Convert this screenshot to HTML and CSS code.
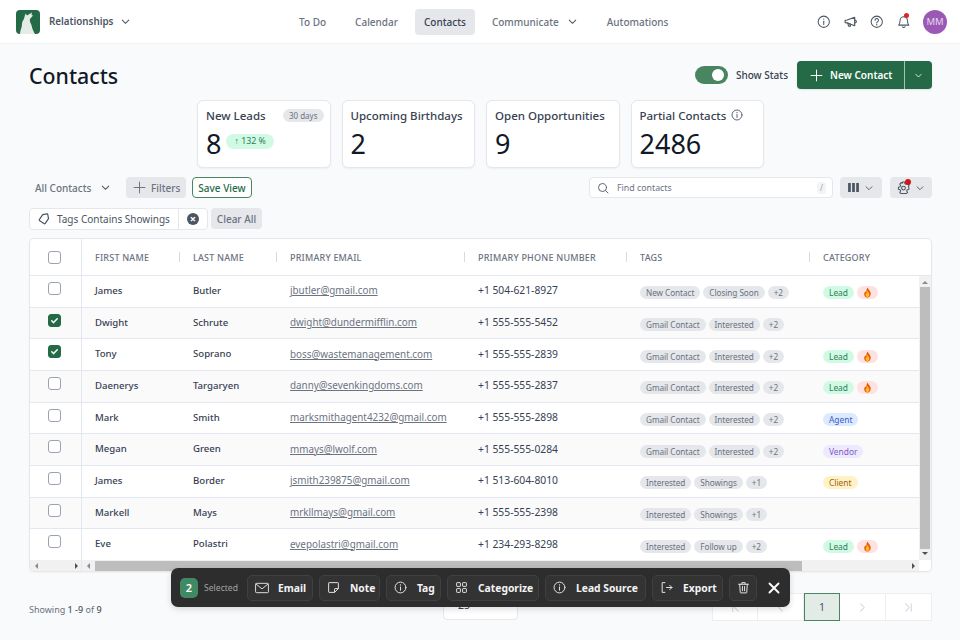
FILE: index.html
```html
<!DOCTYPE html>
<html lang="en">
<head>
<meta charset="utf-8">
<title>Contacts</title>
<link rel="stylesheet" href="styles.css">
</head>
<body>
<svg class="defs" width="0" height="0" aria-hidden="true">
  <defs>
    <symbol id="chev" viewBox="0 0 24 24"><path d="M5 9l7 7 7-7" fill="none" stroke="currentColor" stroke-width="2.2" stroke-linecap="round" stroke-linejoin="round"/></symbol>
    <symbol id="info" viewBox="0 0 24 24"><g fill="none" stroke="currentColor" stroke-width="1.8" stroke-linecap="round"><circle cx="12" cy="12" r="10"/><path d="M12 11v6"/><path d="M12 7.2v.1" stroke-width="2.4"/></g></symbol>
    <symbol id="flame" viewBox="0 0 24 24"><path d="M12 1c1 4 6 7 7 12 .8 5-3 10-7 10s-8-4-7-9c.4-2.400 1.600-3.500 2.500-5 .5 1.500 1 2.200 2 2.800C9.500 8 10 4 12 1z" fill="#e8590c"/><path d="M12 8c.6 2.500 4 5 4 8.500 0 3-2 5.500-4 5.500s-4-2.500-4-5.300c0-2 1.300-3 2-4.200.4.800.7 1.200 1.200 1.500C11 12 11 10 12 8z" fill="#fcc419"/></symbol>
  </defs>
</svg>

<header class="topbar">
  <div class="brand">
    <svg class="logo" viewBox="0 0 24 24"><rect width="24" height="24" rx="4" fill="#256a47"/><path d="M4 24c0-4 2-6 2-10 0-3 2-4 2.500-7l1-3.500L11 5.500l5-3-.5 2.500 1.500.5-3 3.500c-.5 1.500 0 3 1 5 1 2 1 5 4 10z" fill="#e5ece7"/></svg>
    <span class="brand-name">Relationships</span>
    <svg class="chev-lg"><use href="#chev"/></svg>
  </div>
  <nav class="nav">
    <a class="nav-item nav-first">To Do</a>
    <a class="nav-item">Calendar</a>
    <a class="nav-item active">Contacts</a>
    <a class="nav-item">Communicate<svg class="chev-lg nav-chev"><use href="#chev"/></svg></a>
    <a class="nav-item">Automations</a>
  </nav>
  <div class="top-icons">
    <svg class="top-icon"><use href="#info"/></svg>
    <svg class="top-icon" viewBox="0 0 24 24"><g fill="none" stroke="currentColor" stroke-width="2" stroke-linejoin="round" stroke-linecap="round"><path d="M2 9.500v4l3.500.5L19 19V4L5.500 9z"/><path d="M7 14.500l1 5.500h3.500l-1-4"/><path d="M19 9c1.700 0 3 1.200 3 2.500S20.700 14 19 14"/></g></svg>
    <svg class="top-icon" viewBox="0 0 24 24"><g fill="none" stroke="currentColor" stroke-width="1.800" stroke-linecap="round"><circle cx="12" cy="12" r="10"/><path d="M9 9.300a3 3 0 1 1 4.600 2.500c-1 .7-1.600 1.300-1.600 2.500"/><path d="M12 17.400v.1" stroke-width="2.400"/></g></svg>
    <span class="bell">
      <svg class="top-icon" viewBox="0 0 24 24"><g fill="none" stroke="currentColor" stroke-width="1.800" stroke-linecap="round" stroke-linejoin="round"><path d="M12 3a6.500 6.500 0 0 0-6.500 6.500c0 5-1 7-2.500 8.500h18c-1.500-1.500-2.500-3.500-2.500-8.500A6.500 6.500 0 0 0 12 3z"/><path d="M9.500 21c.6.8 1.500 1.200 2.500 1.200s1.900-.4 2.500-1.200"/></g></svg>
      <i class="dot dot-bell"></i>
    </span>
    <span class="avatar">MM</span>
  </div>
</header>

<main class="page">
  <div class="title-row">
    <h1 class="title">Contacts</h1>
    <div class="title-actions">
      <span class="toggle"><i class="knob"></i></span>
      <span class="toggle-label">Show Stats</span>
      <div class="split">
        <button class="split-main"><svg class="plus" viewBox="0 0 24 24"><path d="M12 2v20M2 12h20" stroke="currentColor" stroke-width="1.800" stroke-linecap="round"/></svg>New Contact</button>
        <button class="split-caret"><svg class="chev-sm"><use href="#chev"/></svg></button>
      </div>
    </div>
  </div>

  <section class="stats">
    <div class="stat">
      <div class="stat-head"><span>New Leads</span><span class="days">30 days</span></div>
      <div class="stat-value">8<span class="delta">↑ 132 %</span></div>
    </div>
    <div class="stat">
      <div class="stat-head"><span>Upcoming Birthdays</span></div>
      <div class="stat-value">2</div>
    </div>
    <div class="stat">
      <div class="stat-head"><span>Open Opportunities</span></div>
      <div class="stat-value">9</div>
    </div>
    <div class="stat">
      <div class="stat-head stat-head-tight"><span>Partial Contacts</span><svg class="stat-info"><use href="#info"/></svg></div>
      <div class="stat-value">2486</div>
    </div>
  </section>

  <div class="toolbar">
    <span class="view-select">All Contacts<svg class="chev-lg"><use href="#chev"/></svg></span>
    <button class="btn-grey filters"><svg class="plus" viewBox="0 0 24 24"><path d="M12 2v20M2 12h20" stroke="currentColor" stroke-width="1.800" stroke-linecap="round"/></svg>Filters</button>
    <button class="btn-outline">Save View</button>
    <div class="search">
      <svg class="search-icon" viewBox="0 0 24 24"><g fill="none" stroke="currentColor" stroke-width="1.800" stroke-linecap="round"><circle cx="11" cy="11" r="8"/><path d="M17 17l5 5"/></g></svg>
      <span class="search-text">Find contacts</span>
      <span class="slash">/</span>
    </div>
    <button class="btn-grey icon-btn"><svg class="cols" viewBox="0 0 12 10"><path d="M0 0h3v10H0zM4.500 0h3v10h-3zM9 0h3v10H9z" fill="currentColor"/></svg><svg class="chev-md"><use href="#chev"/></svg></button>
    <button class="btn-grey icon-btn gear-btn">
      <span class="gear-wrap">
        <svg class="gear" viewBox="0 0 24 24"><g fill="none" stroke="currentColor" stroke-width="1.900" stroke-linejoin="round"><path d="M10 2h4l.6 3 2.600 1.100 2.600-1.700 2.800 2.800-1.700 2.600L22 12.400v3l-3 .6-1.100 2.600 1.700 2.600-2 1.800H7l-2-1.800 1.700-2.600L5.600 16l-3-.6v-4l3-.6L6.700 8.200 5 5.600l2.800-2.800 2 1.400z"/><circle cx="12" cy="13" r="3.500"/></g></svg>
        <i class="dot dot-gear"></i>
      </span>
      <svg class="chev-md"><use href="#chev"/></svg>
    </button>
  </div>

  <div class="filter-row">
    <div class="chip">
      <span class="chip-label">
        <svg class="tag-icon" viewBox="0 0 24 24"><g fill="none" stroke="currentColor" stroke-width="2.400" stroke-linejoin="round"><path d="M3 11l8-8h8.500a1.500 1.500 0 0 1 1.500 1.500V13l-8 8a2 2 0 0 1-2.800 0L3 14a2 2 0 0 1 0-3z"/></g></svg>
        Tags Contains Showings
      </span>
      <span class="chip-close"><i class="x-circle">×</i></span>
    </div>
    <button class="btn-grey clear">Clear All</button>
  </div>

  <section class="table">
    <div class="thead row-grid">
      <div class="cell-check"><span class="cb"></span></div>
      <div class="th sep">FIRST NAME</div>
      <div class="th sep">LAST NAME</div>
      <div class="th sep">PRIMARY EMAIL</div>
      <div class="th sep">PRIMARY PHONE NUMBER</div>
      <div class="th sep">TAGS</div>
      <div class="th">CATEGORY</div>
    </div>
    <div class="tbody-wrap">
      <div class="tbody">
        <div class="tr row-grid">
          <div class="cell-check"><span class="cb"></span></div>
          <div class="td name">James</div><div class="td name">Butler</div>
          <div class="td"><a class="mail">jbutler@gmail.com</a></div>
          <div class="td phone">+1 504-621-8927</div>
          <div class="td tags"><span class="tag">New Contact</span><span class="tag">Closing Soon</span><span class="tag">+2</span></div>
          <div class="td tags"><span class="tag lead">Lead</span><span class="tag hot"><svg class="flame"><use href="#flame"/></svg></span></div>
        </div>
        <div class="tr row-grid alt">
          <div class="cell-check"><span class="cb on"><svg viewBox="0 0 12 12"><path d="M3 6.300l2 2 4-4.300" fill="none" stroke="#fff" stroke-width="1.600" stroke-linecap="round" stroke-linejoin="round"/></svg></span></div>
          <div class="td name">Dwight</div><div class="td name">Schrute</div>
          <div class="td"><a class="mail">dwight@dundermifflin.com</a></div>
          <div class="td phone">+1 555-555-5452</div>
          <div class="td tags"><span class="tag">Gmail Contact</span><span class="tag">Interested</span><span class="tag">+2</span></div>
          <div class="td tags"></div>
        </div>
        <div class="tr row-grid">
          <div class="cell-check"><span class="cb on"><svg viewBox="0 0 12 12"><path d="M3 6.300l2 2 4-4.300" fill="none" stroke="#fff" stroke-width="1.600" stroke-linecap="round" stroke-linejoin="round"/></svg></span></div>
          <div class="td name">Tony</div><div class="td name">Soprano</div>
          <div class="td"><a class="mail">boss@wastemanagement.com</a></div>
          <div class="td phone">+1 555-555-2839</div>
          <div class="td tags"><span class="tag">Gmail Contact</span><span class="tag">Interested</span><span class="tag">+2</span></div>
          <div class="td tags"><span class="tag lead">Lead</span><span class="tag hot"><svg class="flame"><use href="#flame"/></svg></span></div>
        </div>
        <div class="tr row-grid alt">
          <div class="cell-check"><span class="cb"></span></div>
          <div class="td name">Daenerys</div><div class="td name">Targaryen</div>
          <div class="td"><a class="mail">danny@sevenkingdoms.com</a></div>
          <div class="td phone">+1 555-555-2837</div>
          <div class="td tags"><span class="tag">Gmail Contact</span><span class="tag">Interested</span><span class="tag">+2</span></div>
          <div class="td tags"><span class="tag lead">Lead</span><span class="tag hot"><svg class="flame"><use href="#flame"/></svg></span></div>
        </div>
        <div class="tr row-grid">
          <div class="cell-check"><span class="cb"></span></div>
          <div class="td name">Mark</div><div class="td name">Smith</div>
          <div class="td"><a class="mail">marksmithagent4232@gmail.com</a></div>
          <div class="td phone">+1 555-555-2898</div>
          <div class="td tags"><span class="tag">Gmail Contact</span><span class="tag">Interested</span><span class="tag">+2</span></div>
          <div class="td tags"><span class="tag agent">Agent</span></div>
        </div>
        <div class="tr row-grid alt">
          <div class="cell-check"><span class="cb"></span></div>
          <div class="td name">Megan</div><div class="td name">Green</div>
          <div class="td"><a class="mail">mmays@lwolf.com</a></div>
          <div class="td phone">+1 555-555-0284</div>
          <div class="td tags"><span class="tag">Gmail Contact</span><span class="tag">Interested</span><span class="tag">+2</span></div>
          <div class="td tags"><span class="tag vendor">Vendor</span></div>
        </div>
        <div class="tr row-grid">
          <div class="cell-check"><span class="cb"></span></div>
          <div class="td name">James</div><div class="td name">Border</div>
          <div class="td"><a class="mail">jsmith239875@gmail.com</a></div>
          <div class="td phone">+1 513-604-8010</div>
          <div class="td tags"><span class="tag">Interested</span><span class="tag">Showings</span><span class="tag">+1</span></div>
          <div class="td tags"><span class="tag client">Client</span></div>
        </div>
        <div class="tr row-grid alt">
          <div class="cell-check"><span class="cb"></span></div>
          <div class="td name">Markell</div><div class="td name">Mays</div>
          <div class="td"><a class="mail">mrkllmays@gmail.com</a></div>
          <div class="td phone">+1 555-555-2398</div>
          <div class="td tags"><span class="tag">Interested</span><span class="tag">Showings</span><span class="tag">+1</span></div>
          <div class="td tags"></div>
        </div>
        <div class="tr row-grid">
          <div class="cell-check"><span class="cb"></span></div>
          <div class="td name">Eve</div><div class="td name">Polastri</div>
          <div class="td"><a class="mail">evepolastri@gmail.com</a></div>
          <div class="td phone">+1 234-293-8298</div>
          <div class="td tags"><span class="tag">Interested</span><span class="tag">Follow up</span><span class="tag">+2</span></div>
          <div class="td tags"><span class="tag lead">Lead</span><span class="tag hot"><svg class="flame"><use href="#flame"/></svg></span></div>
        </div>
      </div>
      <div class="vscroll">
        <i class="arr arr-up"></i>
        <span class="vthumb"></span>
        <i class="arr arr-down"></i>
      </div>
    </div>
    <div class="hscroll">
      <div class="hs-fixed"><i class="arr arr-left"></i><i class="arr arr-right"></i></div>
      <div class="hs-main"><i class="arr arr-left"></i><span class="hthumb"></span><i class="arr arr-right"></i></div>
      <div class="hs-corner"></div>
    </div>
  </section>

  <footer class="pager-row">
    <span class="showing">Showing <b>1</b> <b>-9</b> of <b>9</b></span>
    <div class="per-page">25<svg class="chev-md"><use href="#chev"/></svg></div>
    <div class="pager">
      <span class="pg pg-end"><svg class="pg-icon" viewBox="0 0 12 12"><path d="M3 2v8M9 2L5 6l4 4" fill="none" stroke="currentColor" stroke-width="1.100" stroke-linecap="round" stroke-linejoin="round"/></svg></span>
      <span class="pg"><svg class="pg-icon" viewBox="0 0 12 12"><path d="M8 2L4 6l4 4" fill="none" stroke="currentColor" stroke-width="1.100" stroke-linecap="round" stroke-linejoin="round"/></svg></span>
      <span class="pg current">1</span>
      <span class="pg"><svg class="pg-icon" viewBox="0 0 12 12"><path d="M4 2l4 4-4 4" fill="none" stroke="currentColor" stroke-width="1.100" stroke-linecap="round" stroke-linejoin="round"/></svg></span>
      <span class="pg pg-end"><svg class="pg-icon" viewBox="0 0 12 12"><path d="M9 2v8M3 2l4 4-4 4" fill="none" stroke="currentColor" stroke-width="1.100" stroke-linecap="round" stroke-linejoin="round"/></svg></span>
    </div>
  </footer>
</main>

<aside class="bulk">
  <span class="count">2</span>
  <span class="selected">Selected</span>
  <button class="bulk-btn b-email"><svg class="bi" viewBox="0 0 24 24"><g fill="none" stroke="currentColor" stroke-width="1.600" stroke-linejoin="round"><rect x="1" y="4" width="22" height="16" rx="1.500"/><path d="M1.500 5l10.500 8.500L22.500 5"/></g></svg>Email</button>
  <button class="bulk-btn b-note"><svg class="bi" viewBox="0 0 24 24"><path d="M4 3h16a1 1 0 0 1 1 1v10l-7 7H4a1 1 0 0 1-1-1V4a1 1 0 0 1 1-1zM14 21v-6a1 1 0 0 1 1-1h6" fill="none" stroke="currentColor" stroke-width="1.800" stroke-linejoin="round"/></svg>Note</button>
  <button class="bulk-btn b-tag"><svg class="bi"><use href="#info"/></svg>Tag</button>
  <button class="bulk-btn b-cat"><svg class="bi" viewBox="0 0 24 24"><g fill="none" stroke="currentColor" stroke-width="1.800"><rect x="3" y="3" width="7" height="7" rx="1"/><rect x="14" y="3" width="7" height="7" rx="1"/><rect x="3" y="14" width="7" height="7" rx="1"/><rect x="14" y="14" width="7" height="7" rx="1"/></g></svg>Categorize</button>
  <button class="bulk-btn b-lead"><svg class="bi"><use href="#info"/></svg>Lead Source</button>
  <button class="bulk-btn b-export"><svg class="bi" viewBox="0 0 24 24"><path d="M9 3H4v18h5M12 12h10M18 8l4 4-4 4" fill="none" stroke="currentColor" stroke-width="1.800" stroke-linecap="round" stroke-linejoin="round"/></svg>Export</button>
  <button class="bulk-btn b-trash"><svg class="bi" viewBox="0 0 24 24"><g fill="none" stroke="currentColor" stroke-width="1.800" stroke-linecap="round" stroke-linejoin="round"><path d="M3 6h18M9 6V3h6v3M5 6l1 15a1 1 0 0 0 1 1h10a1 1 0 0 0 1-1l1-15M10 10v8M14 10v8"/></g></svg></button>
  <svg class="bulk-x" viewBox="0 0 12 12"><path d="M1.500 1.500l9 9M10.500 1.500l-9 9" stroke="#fff" stroke-width="1.900" stroke-linecap="round"/></svg>
</aside>
</body>
</html>
```
FILE: styles.css
```css
* { box-sizing: border-box; }
html, body { margin: 0; height: 640px; overflow: hidden; }
body { background: #f9fafb; font-family: "Noto Sans", sans-serif; color: #111827; position: relative; }
button { font-family: inherit; border: 0; padding: 0; cursor: pointer; }
a { text-decoration: none; }
.defs { position: absolute; }
svg { display: block; flex: none; }
.chev-lg { width: 11px; height: 11px; color: #4b5563; }
.chev-md { width: 10px; height: 10px; color: #4b5563; }
.chev-sm { width: 9px; height: 9px; color: #fff; }

.topbar { height: 43px; background: #fff; display: flex; align-items: center; padding: 0 13px 0 16px; box-shadow: 0 1px 1px rgba(17,24,39,.04); }
.brand { width: 274px; display: flex; align-items: center; }
.logo { width: 24px; height: 24px; margin-right: 9px; }
.brand-name { font-size: 9.800px; font-weight: 600; color: #4b5563; margin-right: 7px; }
.nav { display: flex; align-items: center; gap: 8px; }
.nav-item { height: 26px; padding: 0 9px; border-radius: 4px; display: flex; align-items: center; font-size: 10px; font-weight: 500; color: #6b7280; }
.nav-first { margin-right: 3px; }
.nav-item.active { background: #e5e7eb; color: #374151; }
.nav-chev { margin-left: 8px; margin-right: 3px; }
.top-icons { margin-left: auto; display: flex; align-items: center; gap: 13px; color: #4b5563; }
.top-icon { width: 13.500px; height: 13.500px; color: #4b5563; }
.bell { position: relative; }
.dot { position: absolute; display: block; border-radius: 50%; background: #dc2626; }
.dot-bell { width: 5px; height: 5px; top: -2px; right: 1px; }
.avatar { width: 24px; height: 24px; border-radius: 50%; background: #9b59b6; color: #e6d5ee; font-size: 9.500px; display: flex; align-items: center; justify-content: center; }

.page { padding: 18px 28px 0 29px; }
.title-row { display: flex; justify-content: space-between; align-items: center; height: 28px; }
.title { margin: 2px 0 0; font-size: 21.300px; font-weight: 500; color: #111827; line-height: 28px; }
.title-actions { display: flex; align-items: center; }
.toggle { width: 33px; height: 18px; border-radius: 9px; background: #4a8562; display: flex; align-items: center; justify-content: flex-end; padding-right: 4px; margin-right: 8px; }
.knob { width: 12px; height: 12px; border-radius: 50%; background: #fff; display: block; }
.toggle-label { font-size: 10px; font-weight: 500; color: #374151; margin-right: 9px; }
.split { display: flex; height: 28px; border-radius: 4px; overflow: hidden; background: #256a47; color: #fff; box-shadow: 0 1px 2px rgba(0,0,0,.1); }
.split-main { width: 108px; background: transparent; color: #fff; font-size: 10px; font-weight: 600; display: flex; align-items: center; padding-left: 13px; gap: 7px; border-right: 1px solid rgba(255,255,255,.6); }
.split-caret { width: 27px; background: transparent; display: flex; align-items: center; justify-content: center; }
.plus { width: 13px; height: 13px; }

.stats { display: flex; justify-content: center; gap: 11px; margin-top: 11px; }
.stat { width: 133.500px; height: 68px; background: #fff; border: 1px solid #e5e7eb; border-radius: 6px; padding: 6px 6px 0 8px; box-shadow: 0 1px 2px rgba(17,24,39,.05); }
.stat-head { display: flex; justify-content: space-between; align-items: center; height: 16px; font-size: 11.500px; font-weight: 500; color: #374151; white-space: nowrap; }
.stat-head-tight { justify-content: flex-start; gap: 5px; }
.stat-info { width: 12px; height: 12px; color: #4b5563; }
.days { background: #e5e7eb; border-radius: 7px; font-size: 8px; font-weight: 400; color: #6b7280; padding: 0 6px; height: 13px; line-height: 13px; }
.stat-value { display: flex; align-items: center; font-size: 27px; line-height: 34px; font-weight: 400; color: #111827; margin-top: 4px; }
.delta { background: #d1fae5; color: #2f7d5a; border-radius: 8px; font-size: 8.800px; height: 15px; line-height: 15px; padding: 0 8px; margin-left: 5px; margin-top: -6px; }

.toolbar { display: flex; align-items: center; height: 21px; margin-top: 9px; }
.view-select { width: 97px; padding-left: 6px; display: flex; align-items: center; gap: 9px; font-size: 10px; font-weight: 500; color: #6b7280; }
.btn-grey { background: #e5e7eb; color: #6b7280; border-radius: 4px; font-size: 10px; font-weight: 500; }
.filters { width: 60px; height: 21px; display: flex; align-items: center; gap: 5px; padding-left: 7px; margin-right: 6px; }
.btn-outline { width: 60px; height: 21px; background: #fff; border: 1px solid #4a8562; border-radius: 4px; color: #256a47; font-size: 10px; font-weight: 500; }
.search { width: 244px; height: 21px; background: #fff; border: 1px solid #e5e7eb; border-radius: 4px; margin-left: auto; display: flex; align-items: center; padding: 0 6px 0 7px; }
.search-icon { width: 12px; height: 12px; color: #4b5563; margin-right: 8px; }
.search-text { font-size: 8.800px; color: #6b7280; flex: 1; }
.slash { background: #f3f4f6; color: #9ca3af; font-size: 8px; border-radius: 3px; padding: 0 3px; line-height: 12px; }
.icon-btn { width: 42px; height: 21px; display: flex; align-items: center; justify-content: center; gap: 5px; margin-left: 7px; color: #4b5563; }
.gear-btn { margin-left: 8px; }
.cols { width: 11px; height: 9px; }
.gear-wrap { position: relative; display: block; }
.gear { width: 13px; height: 13px; }
.dot-gear { width: 6px; height: 6px; top: -2px; right: -1px; background: #d01616; }

.filter-row { display: flex; align-items: center; gap: 3px; margin-top: 10px; height: 21px; }
.chip { width: 179px; height: 22px; background: #fff; border: 1px solid #e5e7eb; border-radius: 4px; display: flex; align-items: center; }
.chip-label { flex: 1; height: 100%; display: flex; align-items: center; gap: 7px; padding-left: 8px; font-size: 10px; color: #4b5563; border-right: 1px solid #e5e7eb; white-space: nowrap; }
.tag-icon { width: 12px; height: 12px; transform: rotate(-10deg); }
.chip-close { width: 28px; display: flex; align-items: center; justify-content: center; }
.x-circle { width: 12px; height: 12px; border-radius: 50%; background: #4b5563; color: #fff; font-style: normal; font-size: 11px; line-height: 12px; text-align: center; font-weight: 700; }
.clear { width: 51px; height: 21px; font-size: 10px; }

.table { margin-top: 9px; height: 334px; background: #fff; border: 1px solid #e5e7eb; border-radius: 5px; overflow: hidden; display: flex; flex-direction: column; box-shadow: 0 1px 2px rgba(17,24,39,.04); }
.row-grid { display: grid; grid-template-columns: 52px 98px 97px 188px 162px 183px 122px; }
.thead { height: 37px; flex: none; border-bottom: 1px solid #e5e7f0; align-items: stretch; }
.cell-check { display: flex; align-items: center; justify-content: center; border-right: 1px solid #e5e7f0; padding-right: 3px; }
.tr .cell-check { padding-bottom: 6px; }
.th { display: flex; align-items: center; padding-left: 13px; padding-top: 1px; font-size: 9px; font-weight: 500; letter-spacing: .2px; color: #6b7280; white-space: nowrap; position: relative; }
.th.sep::after { content: ""; position: absolute; right: 0; top: 13px; height: 10px; width: 1px; background: #d5dbe6; }
.cb { width: 13px; height: 13px; border: 1px solid #9ca3af; border-radius: 3px; background: #fff; display: block; }
.cb.on { background: #256a47; border-color: #256a47; }
.cb.on svg { width: 11px; height: 11px; }
.tbody-wrap { flex: 1; display: flex; min-height: 0; }
.tbody { width: 891px; display: flex; flex-direction: column; overflow: hidden; }
.tr { flex: 1; border-bottom: 1px solid #e5e7f0; min-height: 0; width: 902px; }
.tr:last-child { border-bottom: 0; }
.tr.alt { background: #fafafb; }
.td { display: flex; align-items: center; padding-left: 13px; font-size: 9.600px; white-space: nowrap; padding-bottom: 2px; }
.name { font-weight: 500; color: #374151; }
.mail { color: #6b7280; text-decoration: underline; font-size: 9.850px; }
.phone { color: #374151; font-size: 10.300px; }
.tags { gap: 3px; padding-top: 3px; padding-bottom: 0; }
.tag { height: 13px; line-height: 13px; padding: 0 6px; border-radius: 7px; background: #e5e7eb; color: #6b7280; font-size: 8.200px; letter-spacing: -.05px; display: block; }
.lead { background: #d1fae5; color: #2f7d5a; font-size: 8.400px; letter-spacing: 0; }
.hot { background: #fee2e2; width: 21px; display: flex; align-items: center; justify-content: center; padding: 0; }
.flame { width: 11px; height: 13px; }
.agent { background: #dbeafe; color: #3b5bc9; font-size: 8.400px; letter-spacing: 0; }
.vendor { background: #ede9fe; color: #7c5cc4; font-size: 8.400px; letter-spacing: 0; }
.client { background: #fef3c7; color: #a16207; font-size: 8.400px; letter-spacing: 0; }

.vscroll { width: 12px; flex: none; background: #f1f1f1; display: flex; flex-direction: column; align-items: center; justify-content: space-between; padding: 5px 0 5px; }
.vthumb { width: 10px; flex: 1; margin: 3px 0; background: #bdbdbd; display: block; }
.arr { width: 0; height: 0; display: block; border: 3px solid transparent; flex: none; }
.arr-up { border-bottom-color: #8a8a8a; border-top-width: 0; }
.arr-down { border-top-color: #505050; border-bottom-width: 0; }
.arr-left { border-right-color: #8a8a8a; border-left-width: 0; }
.arr-right { border-left-color: #505050; border-right-width: 0; }
.hscroll { height: 11px; flex: none; display: flex; background: #f1f1f1; }
.hs-fixed { width: 52px; display: flex; justify-content: space-between; align-items: center; padding: 0 3px 0 5px; border-right: 1px solid #e5e7f0; }
.hs-main { flex: 1; display: flex; align-items: center; padding: 0 4px 0 5px; }
.hthumb { width: 707px; height: 10px; margin-left: 5px; background: #bdbdbd; display: block; margin-right: auto; }
.hs-corner { width: 12px; background: #fff; }

.pager-row { display: flex; align-items: flex-start; margin-top: 18px; }
.showing { width: 414px; font-size: 9px; color: #6b7280; margin-top: 13px; }
.showing b { font-weight: 500; color: #4b5563; }
.per-page { width: 75px; height: 30px; background: #fff; border: 1px solid #e5e7eb; border-radius: 4px; display: flex; align-items: center; justify-content: space-between; padding: 0 8px 0 14px; font-size: 10.500px; color: #374151; }
.pager { margin-left: auto; margin-top: 3px; display: flex; height: 28px; background: #fff; border: 1px solid #eceef2; }
.pg { width: 46px; display: flex; align-items: center; justify-content: center; color: #d1d5db; border-right: 1px solid #eceef2; }
.pg-end { width: 45px; }
.pg:last-child { border-right: 0; }
.pg-icon { width: 11px; height: 11px; }
.pg.current { width: 36px; background: #e3ebe6; border: 1px solid #4a8562; color: #4b5563; font-size: 10.500px; margin: -1px 0; }

.bulk { position: absolute; left: 171px; top: 568px; width: 619px; height: 39px; background: #2d2d2d; border-radius: 7px; display: flex; align-items: center; padding-left: 9px; box-shadow: 0 2px 6px rgba(0,0,0,.15); }
.count { width: 18px; height: 20px; border-radius: 5px; background: #3f8a63; color: #fff; font-size: 11px; font-weight: 600; text-align: center; line-height: 20px; }
.selected { font-size: 8.600px; color: #a3a3a3; margin: 0 9px 0 6px; width: 34px; white-space: nowrap; }
.bulk-btn { height: 26px; border-radius: 5px; background: #333; border: 1px solid #404040; color: #f3f4f6; font-size: 10.300px; font-weight: 700; display: flex; align-items: center; padding-left: 7px; gap: 10px; margin-right: 6px; white-space: nowrap; }
.bi { width: 13px; height: 13px; color: #e5e7eb; }
.b-email { width: 66px; gap: 9px; }
.b-email .bi { width: 14px; height: 14px; }
.b-note { width: 61px; }
.b-tag { width: 55px; }
.b-cat { width: 92px; }
.b-lead { width: 101px; }
.b-export { width: 71px; }
.b-trash { width: 28px; padding-left: 7px; margin-right: 11px; }
.bulk-x { width: 12px; height: 12px; }
```
